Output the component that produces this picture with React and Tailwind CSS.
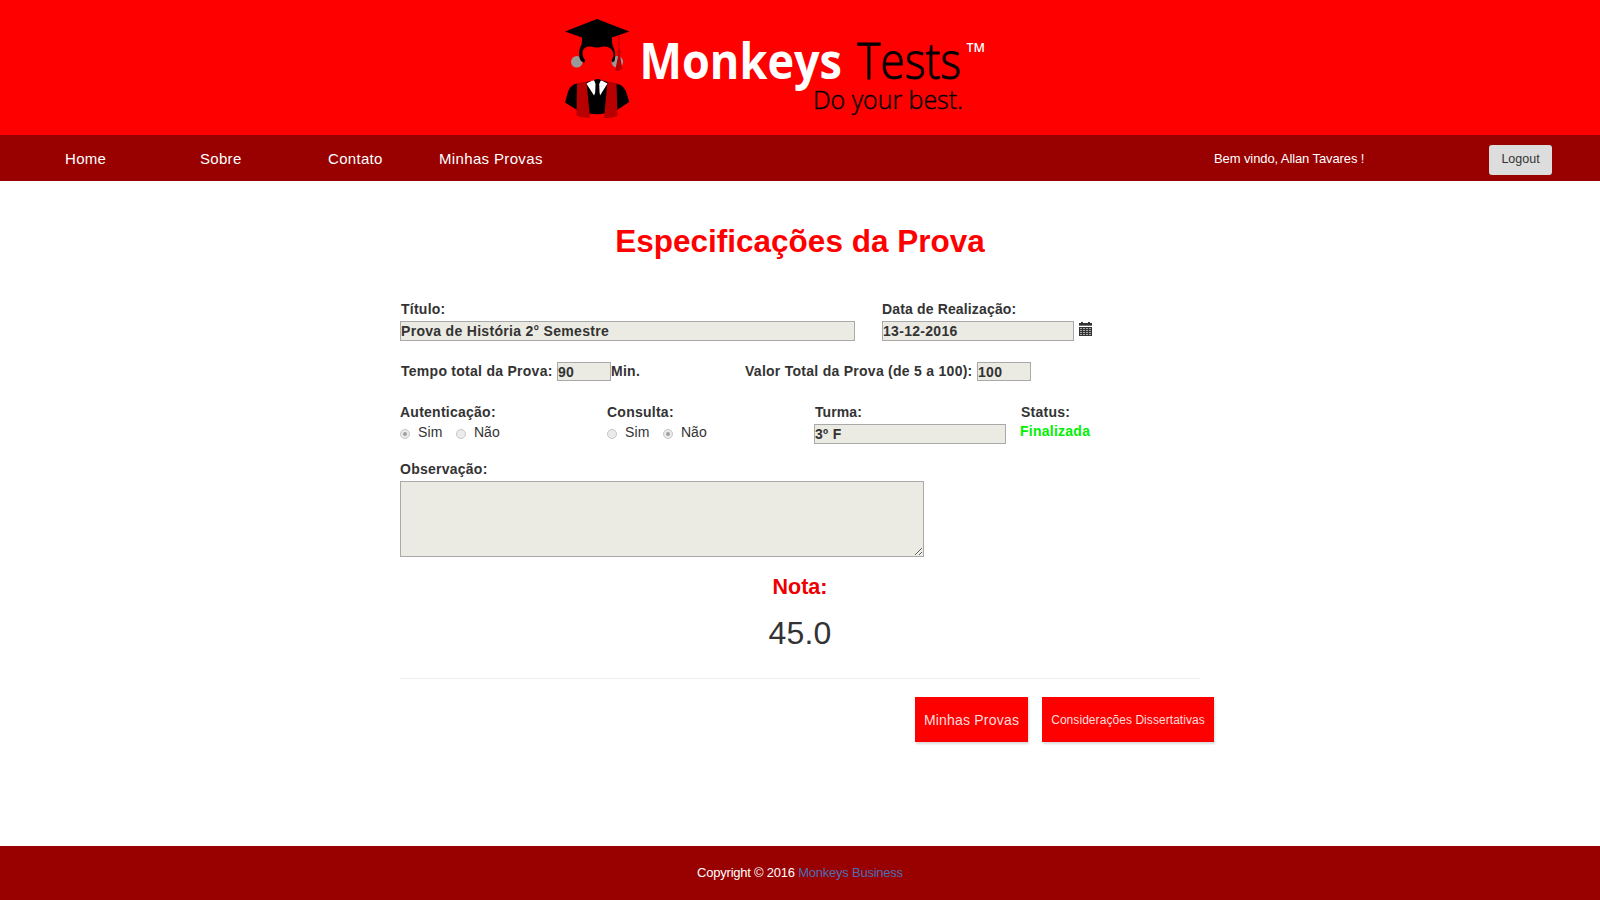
import React from "react";

function Logo() {
  return (
    <svg width="440" height="110" viewBox="560 12 440 110" className="block">
      <circle cx="576.800" cy="61.800" r="5.800" fill="#999" />
      <circle cx="617.300" cy="61.800" r="5.800" fill="#999" />
      <path d="M582 31 V41 Q582 44 580.500 47 C578.500 51 578.500 57 581 61 L584 62.800 L585.200 60.500 C580 53 582.500 45.500 591 46.500 C595 47.700 599 47.700 603 46.500 C611.500 45.500 616.500 53 611.500 60.500 L612.500 62.500 L614.500 61 C616 56 615 50 613 46.500 Q612 44 612 41 V31 Z" fill="#000" />
      <path d="M597 19 L629.300 31.600 L612 37.500 H582 L565 31.600 Z" fill="#000" />
      <path d="M618.500 36 H619.500 V50 L621 52 L620 55 L622.300 69 Q619 71.600 615.200 70.400 L618.300 55 L617.400 52 L618.500 50 Z" fill="#b80000" />
      <path d="M577 83.500 L586.500 82 L594 80.500 L598 79 L602 80.500 L608 82 L617 83.800 C622 85 625 88 626.500 93 L629.300 102 L617 110 L604 113.500 Q597 115 589 113.500 L577 110 L565 102.500 L568 92 C569.500 87.500 572 84.500 577 83.500 Z" fill="#000" />
      <path d="M586.300 83.500 L592 80.700 L597 80 L602 80.700 L607.500 83.500 L600 95.500 L597.500 87 L594 95.500 Z" fill="#fff" />
      <path d="M594 80 Q597.500 78.500 601 80 L599.200 84 L600 104 L597.500 107 L594.800 104 L595.500 84 Z" fill="#000" />
      <path d="M577 83.200 L586.500 81.500 L590 117.700 Q582 118.500 576.500 115.500 Z" fill="#b80000" />
      <path d="M607.500 81.500 L616.500 83.300 L617.500 116 Q611 118.700 604 117.700 Z" fill="#b80000" />
      <g fontFamily="'Open Sans', 'Noto Sans', sans-serif">
        <text x="639.500" y="79.300" fontSize="51" fontWeight="700" fill="#fff" textLength="202.500" lengthAdjust="spacingAndGlyphs">Monkeys</text>
        <text x="857" y="79" fontSize="50" fontWeight="300" fill="#000" stroke="#000" strokeWidth="0.800" textLength="104" lengthAdjust="spacingAndGlyphs">Tests</text>
        <text x="966.500" y="52" fontSize="12" fontWeight="600" fill="#fff" textLength="18.500" lengthAdjust="spacingAndGlyphs">TM</text>
        <text x="813" y="108.700" fontSize="25" fontWeight="300" fill="#000" stroke="#000" strokeWidth="0.400" textLength="150" lengthAdjust="spacingAndGlyphs">Do your best.</text>
      </g>
    </svg>
  );
}

function Field({ className, children }) {
  return <div className={`box-border shrink-0 border border-[#a9a9a9] bg-[#ebebe4] leading-[18px] tracking-[0.3px] ${className}`}>{children}</div>;
}

function Radio({ checked }) {
  return (
    <span className="mt-[7px] flex h-[10px] w-[10px] shrink-0 items-center justify-center rounded-full border border-[#c6c6c6] bg-[#ebebeb]">
      {checked && <span className="h-[4px] w-[4px] rounded-full bg-[#a0a0a0]" />}
    </span>
  );
}

function YesNo({ yes }) {
  return (
    <div className="flex h-5 font-normal tracking-normal">
      <Radio checked={yes} />
      <span className="ml-2 w-[38px] tracking-[0.2px]">Sim</span>
      <Radio checked={!yes} />
      <span className="ml-2">Não</span>
    </div>
  );
}

function CalendarIcon() {
  return (
    <svg width="13" height="14" viewBox="0 0 13 14" className="ml-[5px] mt-px block" fill="#333">
      <path d="M0 1h2V0h2v1h5V0h2v1h2v3H0z" />
      <path d="M0 3h13v1H0z" fill="#777" />
      <path d="M0 5h13v9H0z" />
      <path fill="#aaa" d="M1 6h2v1H1z M4 6h2v1H4z M7 6h2v1H7z M10 6h2v1h-2z M1 8h2v1H1z M4 8h2v1H4z M7 8h2v1H7z M10 8h2v1h-2z M1 10h2v1H1z M4 10h2v1H4z M7 10h2v1H7z M10 10h2v1h-2z M1 12h2v1H1z M4 12h2v1H4z M7 12h2v1H7z M10 12h2v1h-2z" />
    </svg>
  );
}

export default function App() {
  return (
    <div className="flex h-[900px] w-[1600px] flex-col overflow-hidden bg-white font-['Liberation_Sans',Arial,sans-serif] text-[14px] leading-5 text-[#333]">
      <header className="h-[135px] shrink-0 bg-[#ff0000] pl-[560px] pt-3">
        <Logo />
      </header>

      <nav className="flex h-[46px] shrink-0 bg-[#990000] pl-[65px] pr-12 text-[15px] text-white">
        <a className="mt-[14px] w-[135px] tracking-[0.3px]">Home</a>
        <a className="mt-[14px] w-[128px] tracking-[0.3px]">Sobre</a>
        <a className="mt-[14px] w-[111px] tracking-[0.3px]">Contato</a>
        <a className="mt-[14px] tracking-[0.35px]">Minhas Provas</a>
        <span className="ml-auto mt-[14px] w-[275px] text-[13px] tracking-[-0.1px]">Bem vindo, Allan Tavares !</span>
        <button className="mt-[10px] flex h-[30px] w-[63px] justify-center rounded-[3px] bg-[#dddddd] pt-[4px] text-[12.5px] text-[#333]">Logout</button>
      </nav>

      <main className="flex h-[665px] shrink-0 flex-col px-[400px] pt-[42px]">
        <h1 className="text-center text-[31.5px] font-bold leading-9 text-[#ff0000]">Especificações da Prova</h1>

        <div className="mt-10 flex font-bold tracking-[0.25px]">
          <div className="w-[482px]">
            <div className="mb-[2px] pl-px">Título:</div>
            <Field className="h-5 w-[455px]">Prova de História 2° Semestre</Field>
          </div>
          <div>
            <div className="mb-[2px] tracking-[0.15px]">Data de Realização:</div>
            <div className="flex">
              <Field className="h-5 w-[192px]">13-12-2016</Field>
              <CalendarIcon />
            </div>
          </div>
        </div>

        <div className="mt-5 flex h-5 font-bold tracking-[0.27px]">
          <span className="w-[157px] whitespace-nowrap pl-px">Tempo total da Prova:</span>
          <Field className="mt-px h-[19px] w-[54px] leading-[16px]">90</Field>
          <span className="w-[134px]">Min.</span>
          <span className="w-[232px] whitespace-nowrap">Valor Total da Prova (de 5 a 100):</span>
          <Field className="mt-px h-[19px] w-[54px] leading-[16px]">100</Field>
        </div>

        <div className="mt-[21px] flex h-[57px] font-bold tracking-[0.25px]">
          <div className="w-[207px]">
            <div>Autenticação:</div>
            <YesNo yes />
          </div>
          <div className="w-[207px]">
            <div>Consulta:</div>
            <YesNo yes={false} />
          </div>
          <div className="w-[206px]">
            <div className="mb-[2px] pl-px tracking-[0.1px]">Turma:</div>
            <Field className="h-5 w-[192px] tracking-[0.1px]">3º F</Field>
          </div>
          <div>
            <div className="pl-px">Status:</div>
            <div className="-mt-px text-[#00f000]">Finalizada</div>
          </div>
        </div>

        <div className="mb-[2px] font-bold tracking-[0.25px]">Observação:</div>
        <textarea className="block h-[76px] w-[524px] shrink-0 border border-[#a9a9a9] bg-[#ebebe4]" disabled />

        <div className="mt-[18px] text-center text-[21.5px] font-bold leading-6 text-[#ee0000]">Nota:</div>
        <div className="mt-4 text-center text-[32px] leading-9 tracking-[0.2px]">45.0</div>
        <hr className="mt-[27px] border-0 border-t border-[#eeeeee]" />

        <div className="-mr-[14px] mt-[18px] flex justify-end gap-[14px] text-[#ffdddd]">
          <button className="h-[45px] w-[113px] bg-[#ff0000] tracking-[0.2px] shadow-[1px_2px_2px_rgba(0,0,0,0.15)]">Minhas Provas</button>
          <button className="h-[45px] w-[172px] bg-[#ff0000] text-[12px] tracking-[0.06px] shadow-[1px_2px_2px_rgba(0,0,0,0.15)]">Considerações Dissertativas</button>
        </div>
      </main>

      <footer className="h-[54px] shrink-0 bg-[#990000] pt-[17px] text-center text-[13px] tracking-[-0.23px] text-white">
        Copyright © 2016 <a className="text-[#4a6fb5]">Monkeys Business</a>
      </footer>
    </div>
  );
}
